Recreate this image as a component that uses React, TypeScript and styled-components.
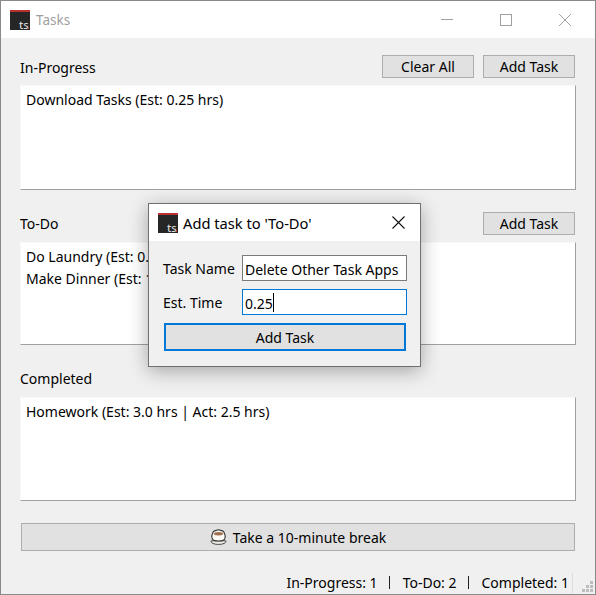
import styled, { createGlobalStyle } from 'styled-components'

const GlobalStyle = createGlobalStyle`
  html, body {
    margin: 0;
    padding: 0;
    background: #f0f0f0;
  }
  * {
    box-sizing: border-box;
  }
`

const sections = [
  { title: 'In-Progress', tasks: ['Download Tasks (Est: 0.25 hrs)'], clear: true, add: true, listHeight: 105 },
  { title: 'To-Do', tasks: ['Do Laundry (Est: 0.25 hrs)', 'Make Dinner (Est: 1.0 hrs)'], clear: false, add: true, listHeight: 103 },
  { title: 'Completed', tasks: ['Homework (Est: 3.0 hrs | Act: 2.5 hrs)'], clear: false, add: false, listHeight: 104 },
]

const AppLogo = () => (
  <LogoBox>
    <LogoText>ts</LogoText>
  </LogoBox>
)

const CupIcon = () => (
  <svg width="17" height="16" viewBox="0 0 17 16">
    <path d="M1.2 11.8 C0.4 14 4 15.4 8.5 15.4 C13 15.4 16.6 14 15.8 11.8 Z" fill="#eeece6" stroke="#444" strokeWidth="1" />
    <path d="M3.4 2.6 C4.6 1.2 6.5 1.6 8.5 0.8 C10.5 1.6 12.4 1.2 13.6 2.6 C15 5 15.6 8 14.6 10 C13.4 12.6 3.6 12.6 2.4 10 C1.4 8 2 5 3.4 2.6 Z" fill="#fbfaf7" stroke="#3a3a3a" strokeWidth="1.1" />
    <ellipse cx="8.5" cy="4.8" rx="4.6" ry="1.7" fill="#a06f4e" />
  </svg>
)

export default function App() {
  return (
    <>
      <GlobalStyle />
      <Window>
        <TitleBar>
          <AppLogo />
          <WindowTitle>Tasks</WindowTitle>
          <WindowControls>
            <svg width="12" height="12" viewBox="0 0 12 12">
              <path d="M0 5.5 H12" stroke="#a0a0a0" strokeWidth="1" />
            </svg>
            <svg width="12" height="12" viewBox="0 0 12 12">
              <rect x="0.5" y="0.5" width="11" height="11" fill="none" stroke="#a0a0a0" strokeWidth="1" />
            </svg>
            <svg width="12" height="12" viewBox="0 0 12 12">
              <path d="M0 0 L12 12 M12 0 L0 12" stroke="#a0a0a0" strokeWidth="1" />
            </svg>
          </WindowControls>
        </TitleBar>
        <Content>
          {sections.map(({ title, tasks, clear, add, listHeight }) => (
            <Section key={title}>
              <SectionHeader>
                <SectionTitle>{title}</SectionTitle>
                {clear && <SmallButton>Clear All</SmallButton>}
                {add && <SmallButton>Add Task</SmallButton>}
              </SectionHeader>
              <TaskList $height={listHeight}>
                {tasks.map((task) => (
                  <li key={task}>{task}</li>
                ))}
              </TaskList>
            </Section>
          ))}
          <BreakButton>
            <CupIcon />
            Take a 10-minute break
          </BreakButton>
        </Content>
        <StatusBar>
          <StatusText>In-Progress: 1</StatusText>
          <StatusSep />
          <StatusText>To-Do: 2</StatusText>
          <StatusSep />
          <StatusText>Completed: 1</StatusText>
          <StatusDivider />
          <Grip>
            <svg width="11" height="11" viewBox="0 0 11 11" fill="#bdbdbd">
              <rect x="8" y="0" width="3" height="3" />
              <rect x="4" y="4" width="3" height="3" />
              <rect x="8" y="4" width="3" height="3" />
              <rect x="0" y="8" width="3" height="3" />
              <rect x="4" y="8" width="3" height="3" />
              <rect x="8" y="8" width="3" height="3" />
            </svg>
          </Grip>
        </StatusBar>

        <Dialog>
          <DialogTitleBar>
            <AppLogo />
            <DialogTitle>Add task to 'To-Do'</DialogTitle>
            <DialogClose>
              <svg width="13" height="13" viewBox="0 0 13 13">
                <path d="M0.5 0.5 L12.5 12.5 M12.5 0.5 L0.5 12.5" stroke="#111" strokeWidth="1.1" />
              </svg>
            </DialogClose>
          </DialogTitleBar>
          <DialogBody>
            <FormRow>
              <FormLabel>Task Name</FormLabel>
              <Field>Delete Other Task Apps</Field>
            </FormRow>
            <FormRow>
              <FormLabel>Est. Time</FormLabel>
              <Field $focused>
                0.25
                <Caret />
              </Field>
            </FormRow>
            <DefaultButton>Add Task</DefaultButton>
          </DialogBody>
        </Dialog>
      </Window>
    </>
  )
}

const Window = styled('div')`
  position: relative;
  display: flex;
  flex-direction: column;
  width: 596px;
  height: 595px;
  border: 1px solid #8a8a8a;
  background: #f0f0f0;
  color: #000;
  font-family: 'Noto Sans', 'Open Sans', sans-serif;
  font-size: 14px;
  overflow: hidden;
`

const TitleBar = styled('div')`
  display: flex;
  align-items: center;
  height: 37px;
  flex-shrink: 0;
  padding-left: 9px;
  background: #fff;
`

const LogoBox = styled('div')`
  position: relative;
  width: 20px;
  height: 20px;
  flex-shrink: 0;
  background: #262626;
  border-top: 2px solid #b8312f;

  &::after {
    content: '';
    position: absolute;
    right: 1px;
    bottom: 1px;
    width: 1px;
    height: 2px;
    background: #c23a34;
  }
`

const LogoText = styled('span')`
  position: absolute;
  left: 9px;
  bottom: 0;
  color: #d8d8d8;
  font-size: 11px;
  font-weight: 500;
  line-height: 11px;
`

const WindowTitle = styled('span')`
  margin-left: 6px;
  color: #a0a0a0;
  font-size: 13.5px;
`

const WindowControls = styled('div')`
  display: flex;
  align-items: center;
  gap: 47px;
  margin-left: auto;
  padding-right: 24px;
`

const Content = styled('div')`
  display: flex;
  flex-direction: column;
  flex: 1;
  padding: 17px 19px 0 19px;
`

const Section = styled('section')`
  display: flex;
  flex-direction: column;
  gap: 7px;
  margin-bottom: 22px;
`

const SectionHeader = styled('div')`
  display: flex;
  align-items: center;
  gap: 9px;
  height: 23px;
  padding-right: 1px;
`

const SectionTitle = styled('span')`
  margin-right: auto;

  ${Section}:first-child & {
    padding-top: 2px;
  }
`

const SmallButton = styled('button')`
  width: 92px;
  height: 23px;
  padding: 0;
  border: 1px solid #adadad;
  background: #e1e1e1;
  color: #000;
  font: inherit;
`

const TaskList = styled('ul')<{ $height: number }>`
  height: ${({ $height }) => $height}px;
  margin: 0;
  padding: 3px 5px;
  list-style: none;
  background: #fff;
  border: 1px solid;
  border-color: #f8f8f8 #a0a0a0 #a0a0a0 #f8f8f8;
  line-height: 22px;

  li {
    white-space: nowrap;
  }
`

const BreakButton = styled('button')`
  display: flex;
  align-items: center;
  justify-content: center;
  gap: 6px;
  height: 28px;
  margin: 0 1px;
  padding: 0;
  border: 1px solid #adadad;
  background: #e1e1e1;
  color: #000;
  font: inherit;
`

const StatusBar = styled('div')`
  display: flex;
  align-items: center;
  justify-content: flex-end;
  height: 21px;
  margin-bottom: 1px;
  flex-shrink: 0;
`

const StatusText = styled('span')`
  white-space: nowrap;
`

const StatusSep = styled('span')`
  width: 1px;
  height: 13px;
  margin: 0 13px 0 11px;
  background: #222;
`

const StatusDivider = styled('span')`
  width: 1px;
  height: 20px;
  margin-left: 3px;
  background: #dcdcdc;
`

const Grip = styled('div')`
  display: flex;
  align-self: flex-end;
  margin: 0 2px 1px 9px;
`

const Dialog = styled('div')`
  position: absolute;
  left: 147px;
  top: 202px;
  display: flex;
  flex-direction: column;
  width: 273px;
  height: 164px;
  border: 1px solid #707070;
  background: #f0f0f0;
  box-shadow: 0 4px 18px rgba(0, 0, 0, 0.32);
`

const DialogTitleBar = styled('div')`
  display: flex;
  align-items: center;
  height: 37px;
  padding-left: 9px;
  background: #fff;
`

const DialogTitle = styled('span')`
  margin-left: 5px;
  font-size: 14.7px;
`

const DialogClose = styled('span')`
  display: flex;
  margin-left: auto;
  padding-right: 15px;
`

const DialogBody = styled('div')`
  display: flex;
  flex-direction: column;
  gap: 8px;
  padding: 14px 13px 0 14px;
`

const FormRow = styled('div')`
  display: flex;
  align-items: center;
  justify-content: space-between;
  height: 26px;
`

const FormLabel = styled('span')`
  white-space: nowrap;
`

const Field = styled('div')<{ $focused?: boolean }>`
  display: flex;
  align-items: center;
  width: 165px;
  height: 26px;
  padding: 2px 0 0 2px;
  background: #fff;
  border: 1px solid ${({ $focused }) => ($focused ? '#0078d7' : '#7a7a7a')};
  white-space: nowrap;
  overflow: hidden;
`

const Caret = styled('span')`
  width: 1px;
  height: 19px;
  margin-top: -2px;
  background: #000;
`

const DefaultButton = styled('button')`
  height: 28px;
  margin: 0 1px;
  padding: 0;
  border: 2px solid #0078d7;
  background: #e1e1e1;
  color: #000;
  font: inherit;
`
